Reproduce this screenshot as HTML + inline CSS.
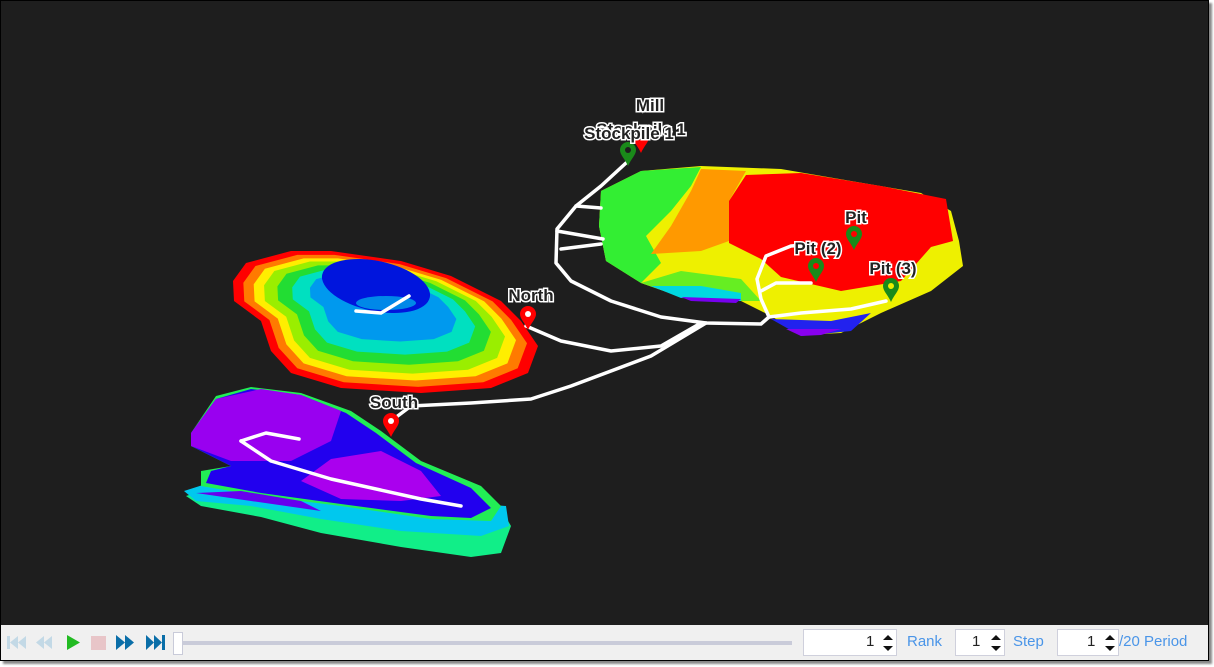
<!DOCTYPE html>
<html><head><meta charset="utf-8"><style>
html,body{margin:0;padding:0;background:#fff;width:1214px;height:667px;overflow:hidden;font-family:"Liberation Sans",sans-serif}
#win{position:absolute;left:0;top:0;width:1207px;height:659px;border:1px solid #000;background:#1e1e1e;box-shadow:3px 3px 2px #888}
#tb{position:absolute;left:0;top:624px;width:1207px;height:35px;background:#f0f0f0}
.box{position:absolute;top:4px;height:25px;border:1px solid #cfd0dc;background:#fff;font-size:15px}
.box span{position:absolute;top:3px;color:#222}
.lbl{position:absolute;top:8px;font-size:15px;color:#4a95e8}
.ar{position:absolute;width:0;height:0;border-left:5px solid transparent;border-right:5px solid transparent}
</style></head><body>
<div id="win">
<svg width="1207" height="624" style="position:absolute;left:0;top:0">
<defs>
<path id="nb" d="M232,280 L245,262 L290,250 L330,250 L400,260 L450,275 L500,300 L520,320 L537,345 L527,372 L490,387 L420,392 L340,387 L290,372 L270,350 L260,320 L233,300 Z"/>
<path id="pin" d="M0,0 C-3,-7 -8,-11 -8,-16 A8,8 0 1 1 8,-16 C8,-11 3,-7 0,0 Z"/>
</defs>
<!-- North -->
<g>
<use href="#nb" fill="#f00"/>
<use href="#nb" fill="#ff7a00" transform="translate(380,305) scale(.93) translate(-380,-305)"/>
<use href="#nb" fill="#ffee00" transform="translate(380,303) scale(.86) translate(-380,-303)"/>
<use href="#nb" fill="#9aee00" transform="translate(380,300) scale(.79) translate(-380,-300)"/>
<use href="#nb" fill="#22dd33" transform="translate(380,298) scale(.70) translate(-380,-298)"/>
<use href="#nb" fill="#00e0c0" transform="translate(380,296) scale(.60) translate(-380,-296)"/>
<use href="#nb" fill="#0099ee" transform="translate(380,293) scale(.48) translate(-380,-293)"/>
<ellipse cx="375" cy="285" rx="55" ry="25" fill="#0015dd" transform="rotate(12 375 285)"/>
<ellipse cx="385" cy="302" rx="30" ry="7" fill="#0088e8"/>
</g>
<!-- South -->
<g>
<path d="M185,495 L230,480 L320,500 L420,510 L500,508 L510,525 L500,552 L470,556 L400,546 L320,532 L260,516 L200,505 Z" fill="#11ee88"/>
<path d="M183,490 L230,475 L330,492 L430,500 L505,505 L508,525 L480,535 L400,530 L320,518 L250,505 L195,500 Z" fill="#00c8ee"/>
<path d="M190,432 L215,395 L250,386 L300,392 L350,410 L380,430 L420,460 L480,485 L500,505 L490,520 L430,518 L340,505 L260,495 L200,485 L200,470 L230,465 L190,445 Z" fill="#22ee55"/>
<path d="M190,432 L215,398 L250,388 L300,394 L345,412 L375,432 L415,462 L470,487 L490,507 L470,517 L430,515 L340,503 L260,492 L205,482 L210,470 L230,465 L190,445 Z" fill="#2200ee"/>
<path d="M190,432 L215,398 L260,388 L300,394 L340,410 L330,440 L290,460 L230,460 L190,445 Z" fill="#9900f0"/>
<path d="M300,480 L330,458 L380,450 L420,470 L440,495 L400,500 L340,498 Z" fill="#aa00ee"/>
<path d="M195,492 L250,500 L320,510 L300,500 L240,490 Z" fill="#6600ee"/>
</g>
<!-- Pit -->
<g>
<path d="M600,190 L640,170 L700,165 L780,168 L850,180 L920,192 L950,210 L958,240 L962,265 L930,290 L880,312 L840,332 L800,334 L770,315 L740,300 L680,296 L640,282 L605,260 L598,225 Z" fill="#eef000"/>
<path d="M600,190 L640,170 L700,166 L690,185 L670,210 L645,235 L660,262 L640,282 L605,260 L598,225 Z" fill="#33ee33"/>
<path d="M640,282 L680,270 L740,278 L760,300 L740,300 L680,296 Z" fill="#66ee22"/>
<path d="M650,285 L700,285 L740,292 L740,300 L680,297 Z" fill="#00d8e0"/>
<path d="M680,296 L740,298 L735,302 L690,300 Z" fill="#7700ee"/>
<path d="M700,168 L745,170 L728,200 L728,240 L700,250 L650,253 L670,225 L690,190 Z" fill="#ff9900"/>
<path d="M728,200 L745,174 L800,172 L880,185 L945,198 L952,240 L930,246 L900,280 L840,290 L780,276 L760,258 L728,242 Z" fill="#f00"/>
<path d="M770,318 L830,320 L870,312 L850,330 L800,335 Z" fill="#2222ee"/>
<path d="M785,328 L840,328 L820,334 L800,335 Z" fill="#8800ee"/>
</g>
<!-- roads -->
<g fill="none" stroke="#fff" stroke-width="3.5" stroke-linejoin="round" stroke-linecap="round">
<path d="M625,162 L600,185 L575,205 L556,228 L555,262 L570,280 L610,300 L660,316 L705,322 L760,323 L768,316 L760,298 L756,278 L765,255 L790,245 L815,243"/>
<path d="M556,230 L602,238"/><path d="M560,248 L600,243"/><path d="M575,205 L600,207"/>
<path d="M760,290 L775,282 L810,282"/>
<path d="M525,325 L560,340 L610,350 L660,345 L700,322"/>
<path d="M390,420 L410,405 L470,402 L530,398 L570,385 L650,355 L705,322"/>
<path d="M768,316 L800,312 L850,308 L885,300"/>
<path d="M240,440 L265,432 L298,438"/>
<path d="M240,440 L270,460 L330,478 L420,498 L460,505"/>
<path d="M355,310 L380,312 L408,295"/>
</g>
<!-- pins -->
<g>
<use href="#pin" fill="#f00" transform="translate(640,152)"/><circle cx="640" cy="136" r="3" fill="#1e1e1e"/>
<use href="#pin" fill="#1a8a1a" transform="translate(627,165)"/><circle cx="627" cy="149" r="3" fill="#1e1e1e"/>
<use href="#pin" fill="#f00" transform="translate(527,329)"/><circle cx="527" cy="313" r="3" fill="#fff"/>
<use href="#pin" fill="#f00" transform="translate(390,436)"/><circle cx="390" cy="420" r="3" fill="#fff"/>
<use href="#pin" fill="#1a8a1a" transform="translate(853,249)"/><circle cx="853" cy="233" r="3" fill="#f00"/>
<use href="#pin" fill="#1a8a1a" transform="translate(815,281)"/><circle cx="815" cy="265" r="3" fill="#f00"/>
<use href="#pin" fill="#1a8a1a" transform="translate(890,301)"/><circle cx="890" cy="285" r="3" fill="#ee0"/>
</g>
<g font-family="Liberation Sans" font-weight="bold" font-size="17" fill="#222" stroke="#fff" stroke-width="3" paint-order="stroke" text-anchor="middle">
<text x="649" y="110">Mill</text>
<text x="640" y="134">Stockpile 1</text>
<text x="628" y="138">Stockpile 1</text>
<text x="530" y="300">North</text>
<text x="393" y="407">South</text>
<text x="855" y="222">Pit</text>
<text x="817" y="253">Pit (2)</text>
<text x="892" y="273">Pit (3)</text>
</g>
</svg>
<div id="tb">
<svg width="175" height="35" style="position:absolute;left:0;top:0">
<g fill="#c3d9e6"><rect x="6" y="11" width="3" height="13"/><path d="M9,17.5 L17,11 V24Z M17,17.5 L25,11 V24Z"/><path d="M35,17.5 L43,11 V24Z M43,17.5 L51,11 V24Z"/></g>
<path d="M66,10 L79,17.5 L66,25Z" fill="#22bb22"/>
<rect x="90" y="11" width="15" height="14" fill="#e8c5c8"/>
<g fill="#0a6ea8"><path d="M115,10 L124,17.5 L115,25Z M124,10 L133,17.5 L124,25Z"/><path d="M145,10 L153,17.5 L145,25Z M153,10 L161,17.5 L153,25Z"/><rect x="161" y="10" width="3" height="15"/></g>
</svg>
<div style="position:absolute;left:181px;top:16px;width:610px;height:4px;background:#c9cbd9"></div>
<div style="position:absolute;left:172px;top:7px;width:8px;height:21px;background:#fff;border:1px solid #c9cbd9"></div>
<div class="box" style="left:802px;width:92px"><span style="left:62px">1</span><div class="ar" style="left:79px;top:5px;border-bottom:5px solid #111"></div><div class="ar" style="left:79px;top:16px;border-top:5px solid #111"></div></div>
<div class="lbl" style="left:906px">Rank</div>
<div class="box" style="left:954px;width:48px"><span style="left:16px">1</span><div class="ar" style="left:35px;top:5px;border-bottom:5px solid #111"></div><div class="ar" style="left:35px;top:16px;border-top:5px solid #111"></div></div>
<div class="lbl" style="left:1012px">Step</div>
<div class="box" style="left:1056px;width:60px"><span style="left:29px">1</span><div class="ar" style="left:47px;top:5px;border-bottom:5px solid #111"></div><div class="ar" style="left:47px;top:16px;border-top:5px solid #111"></div></div>
<div class="lbl" style="left:1118px">/20 Period</div>
</div>
</div>
</body></html>
